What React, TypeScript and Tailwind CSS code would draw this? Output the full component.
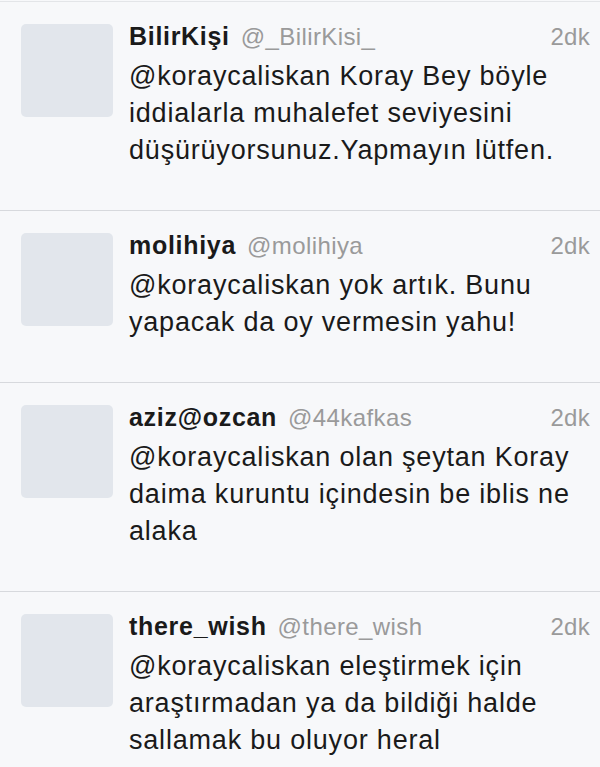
const tweets = [
  {
    name: "BilirKişi",
    handle: "@_BilirKisi_",
    lines: [
      "@koraycaliskan Koray Bey böyle",
      "iddialarla muhalefet seviyesini",
      "düşürüyorsunuz.Yapmayın lütfen.",
    ],
  },
  {
    name: "molihiya",
    handle: "@molihiya",
    lines: ["@koraycaliskan yok artık. Bunu", "yapacak da oy vermesin yahu!"],
  },
  {
    name: "aziz@ozcan",
    handle: "@44kafkas",
    lines: [
      "@koraycaliskan olan şeytan Koray",
      "daima kuruntu içindesin be iblis ne",
      "alaka",
    ],
  },
  {
    name: "there_wish",
    handle: "@there_wish",
    lines: [
      "@koraycaliskan eleştirmek için",
      "araştırmadan ya da bildiği halde",
      "sallamak bu oluyor heral",
    ],
  },
];

function Tweet({ t }: { t: (typeof tweets)[number] }) {
  return (
    <div className="flex border-b border-[#d7d9dd] pl-[21px] pr-[10px] pt-[20px] pb-[41px]">
      <div className="mt-[2px] h-[93px] w-[92px] shrink-0 rounded-[5px] bg-[#e2e6ec]" />
      <div className="ml-[16px] min-w-0 flex-1">
        <div className="flex h-[28px] items-baseline leading-[28px]">
          <span className="text-[25px] font-bold tracking-[0.7px] text-[#1a1a1a]">
            {t.name}
          </span>
          <span className="ml-[11px] text-[24px] tracking-[0.4px] text-[#9a9a9a]">
            {t.handle}
          </span>
          <span className="ml-auto text-[24px] tracking-[0.3px] text-[#9a9a9a]">2dk</span>
        </div>
        <div className="mt-[8px] text-[27px] leading-[37px] tracking-[0.8px] text-[#1a1a1a]">
          {t.lines.map((l) => (
            <div key={l} className="whitespace-nowrap">
              {l}
            </div>
          ))}
        </div>
      </div>
    </div>
  );
}

export default function App() {
  return (
    <div
      className="h-[767px] overflow-hidden bg-[#f7f8fa] pt-px"
      style={{ fontFamily: '"Liberation Sans", Arial, sans-serif' }}
    >
      <div className="border-t border-[#e3e5e8]">
        {tweets.map((t) => (
          <Tweet key={t.name} t={t} />
        ))}
      </div>
    </div>
  );
}
